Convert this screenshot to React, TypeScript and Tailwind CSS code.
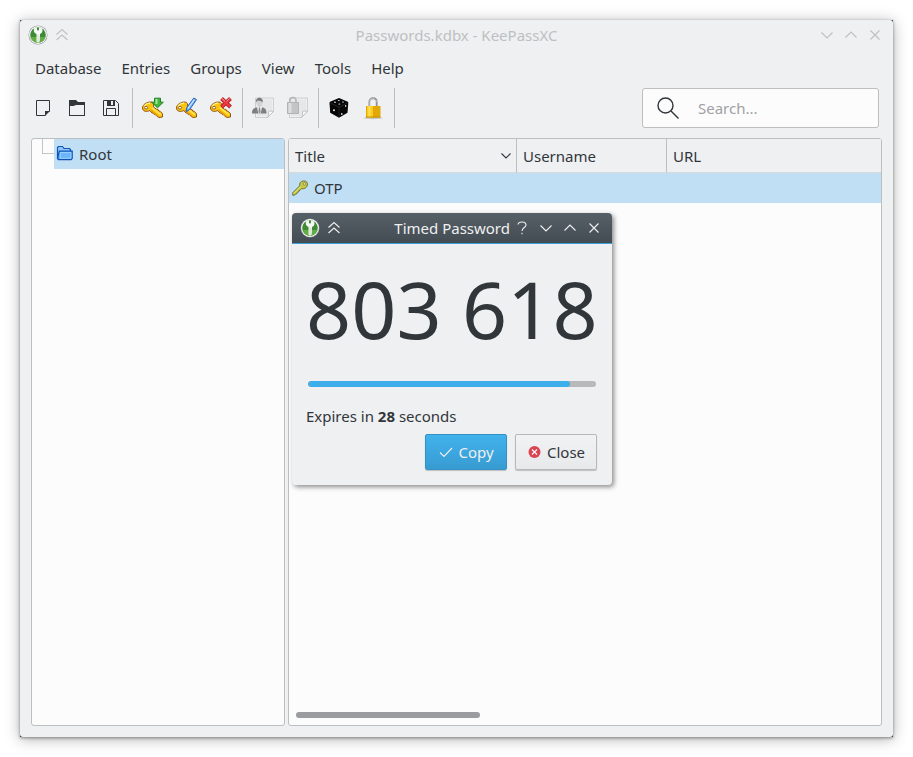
import type { ReactNode } from "react";

const menus = ["Database", "Entries", "Groups", "View", "Tools", "Help"];

function Logo() {
  return (
    <svg viewBox="0 0 20 20" className="size-5" aria-hidden="true">
      <circle cx="10" cy="10" r="9.5" fill="#8d9196" />
      <circle cx="10" cy="10" r="8.9" fill="#fff" />
      <circle cx="10" cy="10" r="7.8" fill="#3f8a35" />
      <path d="M2.500 12a7.800 7.800 0 0 0 15 0z" fill="#62ad45" />
      <path
        d="M6.200 3.200 9 2.200v2.400a1 1 0 0 0 2 0V2.200l2.800 1c1.300 2 .9 4.400-1.800 5.900l-.3 7.400-1.700 1.300-1.500-1.300V9.100C5.800 7.600 5.200 5.200 6.200 3.200z"
        fill="#f7f9f6"
      />
      <path d="M10 9.500v7" stroke="#b9c9b4" strokeWidth="0.700" />
    </svg>
  );
}

function Glyph({ d }: { d: string }) {
  return (
    <svg
      viewBox="0 0 16 16"
      className="size-4"
      fill="none"
      stroke="currentColor"
      strokeWidth="1.1"
      aria-hidden="true"
    >
      <path d={d} />
    </svg>
  );
}

const glyphs = {
  shade: "M2.500 7.500 8 2.500l5.500 5M2.500 13 8 8l5.500 5",
  help: "M4 4.500C4.500 1 12 1 12 5c0 2.500-4 2.500-4 6M8 12.800v1.400",
  down: "M2.500 5.500 8 11l5.500-5.500",
  up: "M2.500 10.500 8 5l5.500 5.500",
  close: "M3.500 3.500l9 9M12.500 3.500l-9 9",
};

function WindowButton({ label, d }: { label: string; d: string }) {
  return (
    <button type="button" aria-label={label} className="flex h-6 w-6 items-center justify-center">
      <Glyph d={d} />
    </button>
  );
}

function YellowKey() {
  return (
    <>
      <path
        d="M1.500 12C1.500 8.500 6 5.800 9.800 6c2.700.1 3.300 2.500 2.500 4.800l3.200 2.500 1.500.2.700 1.500 1.500.3 2.300 2.400V21l-3.500.5-2.300-1.400-.5-1.300-1.900-.2-.5-1.400-1.800-.2-2.200-2.500C6 16.200 1.500 15.500 1.500 12z"
        fill="#fac60c"
        stroke="#96561a"
        strokeLinejoin="round"
      />
      <path d="M3.200 10.500c.9-1.900 3.400-3.200 6-3.300" stroke="#fff09a" strokeWidth="1.300" />
      <path d="m10.800 11.500 9 7.200" stroke="#ffe868" strokeWidth="1.300" />
      <path d="m9.800 14 7 6" stroke="#e89a0c" strokeWidth="1.200" />
      <ellipse cx="5" cy="11.700" rx="1.700" ry="1.300" fill="#fff" stroke="#96561a" strokeWidth="0.900" />
    </>
  );
}

function ToolIcon({ children }: { children: ReactNode }) {
  return (
    <svg viewBox="0 0 24 24" className="size-6" fill="none" aria-hidden="true">
      {children}
    </svg>
  );
}

function GreyPage() {
  return (
    <>
      <path d="M4.500 2h18v13.500l-6 6h-12z" fill="#f0f0f1" stroke="#cdcecf" />
      <path d="M6 3.500h15V15l-5 5H6z" fill="#e6e7e8" />
      <path d="M22.500 15.500c-2.200-.7-3.700-.5-5 0 .3 2.200 0 4.200-1 6z" fill="#fafafa" stroke="#bfc0c2" />
    </>
  );
}

const tools: { label: string; icon: ReactNode }[][] = [
  [
    {
      label: "New database",
      icon: (
        <>
          <path d="M14.500 19.500h-9v-15h13v11" stroke="#31363b" />
          <path d="M14 20v-5h5z" fill="#31363b" />
        </>
      ),
    },
    {
      label: "Open database",
      icon: (
        <path
          d="M4 4h7l2 2h7v14H4zM5 10v9h14V9h-8l-2.500 1z"
          fill="#31363b"
          fillRule="evenodd"
        />
      ),
    },
    {
      label: "Save database",
      icon: (
        <>
          <path d="M4.500 4.500h12l3 3v12h-15z" stroke="#31363b" />
          <path d="M8 4h8v6H8zM12 5v4h2V5z" fill="#31363b" fillRule="evenodd" />
          <path d="M7.500 19.500v-7h9v7" stroke="#31363b" />
        </>
      ),
    },
  ],
  [
    {
      label: "Add new entry",
      icon: (
        <>
          <YellowKey />
          <path
            d="M13.500 2.200h6v4h2.800l-5.800 5.600-5.800-5.600h2.800z"
            fill="#3fb837"
            stroke="#23802a"
            strokeLinejoin="round"
          />
          <path d="M15.500 3v5" stroke="#a4ea9a" strokeWidth="2" />
        </>
      ),
    },
    {
      label: "Edit entry",
      icon: (
        <>
          <YellowKey />
          <path
            d="m18.800 2 2.700 1.600-7 10.200-3.300 2 .4-4z"
            fill="#6caef5"
            stroke="#2a62bd"
            strokeLinejoin="round"
          />
          <path d="m19.300 3.500-6.300 9" stroke="#d9ecff" strokeWidth="1.200" />
        </>
      ),
    },
    {
      label: "Delete entry",
      icon: (
        <>
          <YellowKey />
          <path d="m12.500 2.500 9 8.500M21.500 2.500l-9 8.500" stroke="#b8202a" strokeWidth="4" />
          <path d="m12.800 2.800 8.400 7.900M21.200 2.800l-8.400 7.900" stroke="#ee3a42" strokeWidth="2.200" />
          <path d="m13 2.500 3 2.800M20.500 2.500l-3 2.800" stroke="#ff9c98" />
        </>
      ),
    },
  ],
  [
    {
      label: "Copy username",
      icon: (
        <>
          <GreyPage />
          <path d="M1 17.500c-.3-4 1.500-5.800 5-6.300h4.500c3.500.5 5.300 2.300 5 6.300z" fill="#7d7f81" />
          <path d="M6 11h5l-1.300 6.500H7.200z" fill="#efeff0" />
          <path d="M7.900 11.500h1.200l.5 4.500-1.100 1.500L7.400 16z" fill="#8a8c8e" />
          <path d="M5.200 5.500c0-4 6.400-4 6.400 0 0 3.200-1.500 5.500-3.200 5.500S5.200 8.700 5.200 5.500z" fill="#d2d3d4" />
          <path d="M5 6.500C4.200.3 12.600.3 11.800 6.500 11.300 4.800 7.500 4.800 6.700 4.500 5.900 4.800 5.400 5.500 5 6.500z" fill="#77797b" />
        </>
      ),
    },
    {
      label: "Copy password",
      icon: (
        <>
          <GreyPage />
          <path d="M5 7V4.500c0-4 6-4 6 0V7" stroke="#b4b5b6" strokeWidth="1.500" />
          <path d="M2.500 6.500h11v11h-11z" fill="#c3c4c5" stroke="#b2b3b4" />
          <path d="M5 7v10" stroke="#dddede" strokeWidth="3" />
        </>
      ),
    },
  ],
  [
    {
      label: "Password generator",
      icon: (
        <>
          <path d="m12 2 8.800 3.700.5 1-.8 10.100-8.500 4.900-8.800-4.900L2.500 6.700l.5-1z" fill="#060606" />
          <path d="m3.500 7 8.500 4.300L20.500 7M12 11.500V21" stroke="#303133" strokeWidth="0.700" />
          <g fill="#e4e4e4">
            <ellipse cx="8" cy="6.200" rx="1" ry="0.600" />
            <ellipse cx="11.800" cy="4.400" rx="1" ry="0.500" />
            <ellipse cx="12.300" cy="8" rx="1" ry="0.600" />
            <ellipse cx="16" cy="6" rx="1" ry="0.600" />
            <circle cx="7" cy="14.200" r="1" />
            <ellipse cx="14.800" cy="18" rx="0.800" ry="1.100" />
            <ellipse cx="18.700" cy="10" rx="0.700" ry="1" />
          </g>
        </>
      ),
    },
    {
      label: "Lock databases",
      icon: (
        <>
          <ellipse cx="12" cy="22" rx="9.500" ry="1.200" fill="#c6c7c9" />
          <path d="M8.300 11V6c0-5 7.400-5 7.400 0v5" stroke="#8f9193" strokeWidth="1.800" />
          <path d="M8 11V6c0-4.300 6.500-4.500 7.700 0" stroke="#d4d5d6" strokeWidth="0.700" />
          <path d="M5 10h14.500v11.500H5z" fill="#e3a706" />
          <path d="M6 10h6v11.500H6z" fill="#fbcb1d" />
          <path d="M7.500 10h2v11.500h-2z" fill="#ffe25a" />
          <path d="M5 21h14.500" stroke="#c88c00" />
        </>
      ),
    },
  ],
];

function TimedPasswordDialog() {
  return (
    <section
      role="dialog"
      aria-label="Timed Password"
      className="absolute top-[193px] left-[272px] w-80 overflow-hidden rounded-[4px] bg-[#eff0f1] shadow-[2px_2px_5px_rgba(0,0,0,0.45)]"
    >
      <header className="flex h-[31px] items-center border-b border-[#3d9fd8] bg-gradient-to-b from-[#566067] to-[#444c53] px-1.5 text-[#eff0f1]">
        <span className="flex w-6 justify-center">
          <Logo />
        </span>
        <WindowButton label="Shade" d={glyphs.shade} />
        <h2 className="flex-1 text-right">Timed Password</h2>
        <WindowButton label="Help" d={glyphs.help} />
        <WindowButton label="Minimize" d={glyphs.down} />
        <WindowButton label="Maximize" d={glyphs.up} />
        <WindowButton label="Close window" d={glyphs.close} />
      </header>
      <div className="px-3.5 pt-[11px] pb-[15px]">
        <p className="text-[79px] leading-[108px] whitespace-nowrap">803 618</p>
        <div
          role="progressbar"
          aria-label="Time left"
          aria-valuenow={91}
          className="mx-0.5 mt-[18px] h-1.5 overflow-hidden rounded-full bg-[#b8b9ba]"
        >
          <div className="h-full w-[91%] rounded-full bg-[#3daee9]" />
        </div>
        <p className="mt-[19px]">
          Expires in <b>28</b> seconds
        </p>
        <div className="mt-2 flex justify-end gap-2 pr-px">
          <button
            type="button"
            className="flex h-9 w-[82px] items-center justify-center gap-1 rounded-[2px] border border-[#3590c4] bg-gradient-to-b from-[#41b2ec] to-[#389bd2] text-[#eff0f1] shadow-[0_1px_1px_rgba(0,0,0,0.2)]"
          >
            <Glyph d="m2 8.500 4 4 8-8.500" />
            Copy
          </button>
          <button
            type="button"
            className="flex h-9 w-[82px] items-center justify-center gap-1 rounded-[2px] border border-[#b5b7b9] bg-gradient-to-b from-[#f1f2f3] to-[#e8e9ea] shadow-[0_1px_1px_rgba(0,0,0,0.2)]"
          >
            <svg viewBox="0 0 16 16" className="size-4" aria-hidden="true">
              <circle cx="7.500" cy="8" r="6" fill="#da4453" />
              <path d="m5 5.500 5 5m0-5-5 5" stroke="#fff" strokeWidth="1.100" />
            </svg>
            Close
          </button>
        </div>
      </div>
    </section>
  );
}

export default function App() {
  return (
    <div className="h-screen bg-white p-5 font-['Noto_Sans',sans-serif] text-[15px] leading-5 text-[#31363b]">
      <div className="h-full bg-[#31363b] shadow-[0_2px_14px_rgba(0,0,0,0.3),0_1px_3px_rgba(0,0,0,0.4)]">
        <main className="relative flex h-full flex-col rounded-[3px] bg-[#eff0f1]">
          <header className="flex h-[30px] shrink-0 items-center px-1.5 text-[#bdc0c3]">
            <div className="flex w-[72px] items-center">
              <span className="flex w-6 justify-center">
                <Logo />
              </span>
              <WindowButton label="Shade" d={glyphs.shade} />
            </div>
            <h1 className="flex-1 text-center">Passwords.kdbx - KeePassXC</h1>
            <WindowButton label="Minimize" d={glyphs.down} />
            <WindowButton label="Maximize" d={glyphs.up} />
            <WindowButton label="Close window" d={glyphs.close} />
          </header>

          <nav className="mb-0.5 flex h-9 shrink-0 items-center px-[5px]">
            {menus.map((menu) => (
              <button key={menu} type="button" className="px-2.5">
                {menu}
              </button>
            ))}
          </nav>

          <div className="flex h-10 shrink-0 items-stretch pr-3.5 pl-1.5">
            {tools.map((group) => (
              <div key={group[0].label} className="mr-[3px] flex border-r border-[#bcbebf] pr-1">
                {group.map((tool) => (
                  <button
                    key={tool.label}
                    type="button"
                    aria-label={tool.label}
                    className="flex w-[34px] items-center justify-center"
                  >
                    <ToolIcon>{tool.icon}</ToolIcon>
                  </button>
                ))}
              </div>
            ))}
            <label className="ml-auto flex w-[237px] items-center rounded-[3px] border border-[#bcbebf] bg-[#fcfcfc] pl-3">
              <svg
                viewBox="0 0 26 26"
                className="size-[26px] shrink-0"
                fill="none"
                stroke="#31363b"
                strokeWidth="1.400"
                aria-hidden="true"
              >
                <circle cx="10.500" cy="10.500" r="7.500" />
                <path d="m16 16 7.500 7.500" />
              </svg>
              <input
                type="text"
                aria-label="Search"
                placeholder="Search..."
                className="ml-[17px] w-full min-w-0 bg-transparent outline-none placeholder:text-[#9fa1a3]"
              />
            </label>
          </div>

          <div className="flex min-h-0 flex-1 gap-[3px] px-[11px] pt-2.5 pb-[11px]">
            <aside className="w-[254px] shrink-0 rounded-[3px] border border-[#bcbebf] bg-[#fcfcfc]">
              <ul>
                <li className="flex h-[30px]">
                  <span className="ml-2.5 h-[15px] w-3 border-b border-l border-[#c3c5c6]" />
                  <button type="button" className="flex flex-1 items-center gap-[5px] bg-[#c1dff4] pl-0.5">
                    <svg viewBox="0 0 18 18" className="size-[18px]" aria-hidden="true">
                      <path
                        d="M1.500 13.500v-11l1-1h4l1.500 2h5.500l1 1V7"
                        fill="#8ec7fb"
                        stroke="#1055b8"
                        strokeWidth="1.200"
                      />
                      <path
                        d="M1.500 13.500 3.300 6.200h12.900v7.300l-1.200 1.200H2.500z"
                        fill="#4ba2f7"
                        stroke="#0f52b5"
                        strokeWidth="1.200"
                      />
                      <path d="M4.300 7.400H15v5.900H4z" fill="#6bb6fb" stroke="#b5dcff" strokeWidth="0.800" />
                    </svg>
                    Root
                  </button>
                </li>
              </ul>
            </aside>

            <section className="flex min-w-0 flex-1 flex-col justify-between rounded-[3px] border border-[#bcbebf] bg-[#fcfcfc]">
              <table className="w-full table-fixed border-separate border-spacing-0 text-left">
                <thead>
                  <tr className="h-[34px] bg-[#eff0f1]">
                    <th className="w-[228px] border-r border-b border-r-[#bcbebf] border-b-[#d8dadb] px-1.5 font-normal">
                      <span className="flex items-center justify-between">
                        Title
                        <svg
                          viewBox="0 0 16 16"
                          className="-mr-1 size-4"
                          fill="none"
                          stroke="currentColor"
                          strokeWidth="1.100"
                          aria-hidden="true"
                        >
                          <path d="M3.500 5.500 8 10l4.500-4.500" />
                        </svg>
                      </span>
                    </th>
                    <th className="w-[150px] border-r border-b border-r-[#bcbebf] border-b-[#d8dadb] px-1.5 font-normal">
                      Username
                    </th>
                    <th className="border-b border-[#d8dadb] px-1.5 font-normal">URL</th>
                  </tr>
                </thead>
                <tbody>
                  <tr className="h-[30px] bg-[#c1dff4]">
                    <td className="pl-[3px]">
                      <span className="flex items-center gap-1.5">
                        <svg viewBox="0 0 16 16" className="size-4" aria-hidden="true">
                          <path
                            d="M8.300 2.500C9.500.8 13 .2 14.700 2c1.300 1.500.8 4.300-1 5.800-1.200.9-2.700 1.200-4 .7L8 10.300l-1 .1-.2 1.400-1.500.4-.3 1.400-1.700.4-.8 1.200H.7v-2.400l7-7c-.2-1.200 0-2.300.6-3.300z"
                            fill="#c6cb45"
                            stroke="#6f6f33"
                          />
                          <path d="m1.700 13.700 7-7" stroke="#e6e98a" />
                          <circle cx="12.300" cy="3.900" r="1.200" fill="#f5f6ec" stroke="#6f6f33" strokeWidth="0.700" />
                        </svg>
                        OTP
                      </span>
                    </td>
                    <td />
                    <td />
                  </tr>
                </tbody>
              </table>
              <div className="mb-[7px] ml-[7px] h-1.5 w-[184px] rounded-full bg-[#9b9ca0]" />
            </section>
          </div>

          <TimedPasswordDialog />
        </main>
      </div>
    </div>
  );
}
